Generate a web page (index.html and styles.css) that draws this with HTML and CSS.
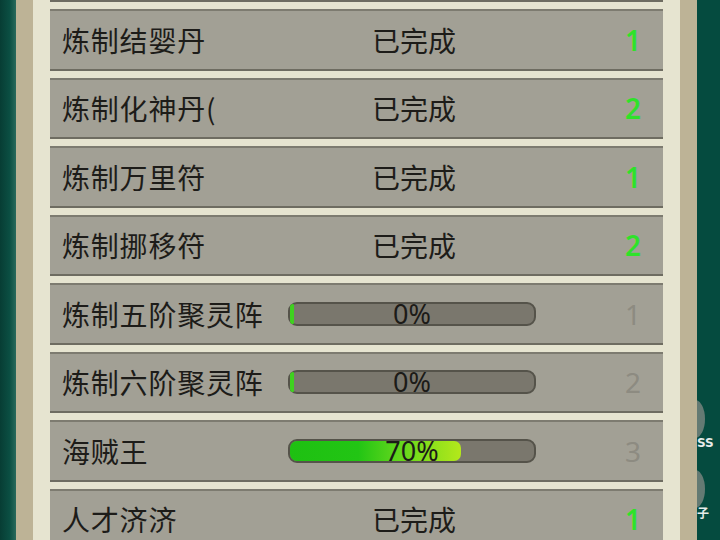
FILE: index.html
```html
<!DOCTYPE html>
<html lang="zh-CN">
<head>
  <meta charset="UTF-8">
  <meta name="viewport" content="width=device-width, initial-scale=1.0">
  <title>任务列表</title>
  <link rel="stylesheet" href="styles.css">
</head>
<body>
  <div class="screen">
    <div class="edge edge-left"></div>
    <div class="frame">
      <div class="frame-inner">
        <div class="task-list">
          <div class="task"></div>
          <div class="task">
            <span class="task-name">炼制结婴丹</span>
            <span class="task-status">已完成</span>
            <span class="task-count done">1</span>
          </div>
          <div class="task">
            <span class="task-name">炼制化神丹(</span>
            <span class="task-status">已完成</span>
            <span class="task-count done">2</span>
          </div>
          <div class="task">
            <span class="task-name">炼制万里符</span>
            <span class="task-status">已完成</span>
            <span class="task-count done">1</span>
          </div>
          <div class="task">
            <span class="task-name">炼制挪移符</span>
            <span class="task-status">已完成</span>
            <span class="task-count done">2</span>
          </div>
          <div class="task">
            <span class="task-name">炼制五阶聚灵阵</span>
            <div class="progress">
              <div class="progress-fill empty"></div>
              <span class="progress-text">0%</span>
            </div>
            <span class="task-count">1</span>
          </div>
          <div class="task">
            <span class="task-name">炼制六阶聚灵阵</span>
            <div class="progress">
              <div class="progress-fill empty"></div>
              <span class="progress-text">0%</span>
            </div>
            <span class="task-count">2</span>
          </div>
          <div class="task">
            <span class="task-name">海贼王</span>
            <div class="progress">
              <div class="progress-fill" style="width: 70%"></div>
              <span class="progress-text">70%</span>
            </div>
            <span class="task-count">3</span>
          </div>
          <div class="task">
            <span class="task-name">人才济济</span>
            <span class="task-status">已完成</span>
            <span class="task-count done">1</span>
          </div>
        </div>
      </div>
    </div>
    <div class="edge edge-right">
      <div class="side-icon side-icon-top"></div>
      <span class="side-label">SS</span>
      <div class="side-icon side-icon-bottom"></div>
      <span class="side-label side-label-bottom">子</span>
    </div>
  </div>
</body>
</html>
```

FILE: styles.css
```css
body {
  margin: 0;
  font-family: "Noto Sans CJK SC", "Noto Sans", sans-serif;
  background-color: #064c40;
}
.screen {
  display: flex;
  width: 720px;
  height: 540px;
  overflow: hidden;
}
.edge {
  background-color: #054b3f;
}
.edge-left {
  width: 16px;
  background: linear-gradient(90deg, #073d34 0%, #0b4f43 60%, #2a6a5c 100%);
}
.edge-right {
  position: relative;
  width: 23px;
  overflow: hidden;
}
.frame {
  display: flex;
  width: 681px;
  padding: 0 17px;
  box-sizing: border-box;
  background-color: #bdb396;
}
.frame-inner {
  flex: 1;
  padding: 0 17px;
  background-color: #e6e4d0;
}
.task-list {
  display: flex;
  flex-direction: column;
  gap: 7px;
  margin-top: -59.5px;
}
.task {
  display: grid;
  grid-template-columns: 238px 248px 1fr;
  align-items: center;
  flex-shrink: 0;
  height: 61.5px;
  box-sizing: border-box;
  background-color: #a2a095;
  border-top: 2px solid #7d7b70;
  border-bottom: 2px solid #6e6c61;
  font-size: 28px;
  color: #1d1c19;
}
.task-name {
  padding-left: 12px;
  white-space: nowrap;
  letter-spacing: 0.8px;
}
.task-status {
  text-align: center;
  padding-left: 4px;
}
.task-count {
  text-align: right;
  padding-right: 22px;
  color: #8d8b81;
  font-family: "Noto Sans", sans-serif;
}
.task-count.done {
  color: #2ee22a;
  font-weight: 600;
}
.progress {
  position: relative;
  height: 24px;
  box-sizing: border-box;
  border: 2px solid #55534a;
  border-radius: 9px;
  background-color: #7a776d;
}
.progress-fill {
  height: 100%;
  border-radius: 7px;
  background: linear-gradient(90deg, #1ec012 0%, #22c514 40%, #59d41c 60%, #b4e81b 100%);
}
.progress-fill.empty {
  width: 4px;
  border-radius: 7px 2px 2px 7px;
  background: #3fd11f;
}
.progress-text {
  position: absolute;
  left: 0;
  right: 0;
  top: 0;
  bottom: 0;
  text-align: center;
  line-height: 20px;
  font-family: "Noto Sans", sans-serif;
  font-size: 27px;
  color: #1c1b18;
}
.side-icon {
  position: absolute;
  left: -12px;
  width: 20px;
  height: 38px;
  border-radius: 50%;
  background-color: #8d8f8a;
  opacity: 0.7;
}
.side-icon-top {
  top: 400px;
}
.side-icon-bottom {
  top: 470px;
}
.side-label {
  position: absolute;
  left: 0;
  top: 436px;
  font-family: "DejaVu Sans", sans-serif;
  font-weight: bold;
  font-size: 12px;
  color: #e6ecea;
}
.side-label-bottom {
  top: 504px;
  font-family: "Noto Sans CJK SC", sans-serif;
}
```
